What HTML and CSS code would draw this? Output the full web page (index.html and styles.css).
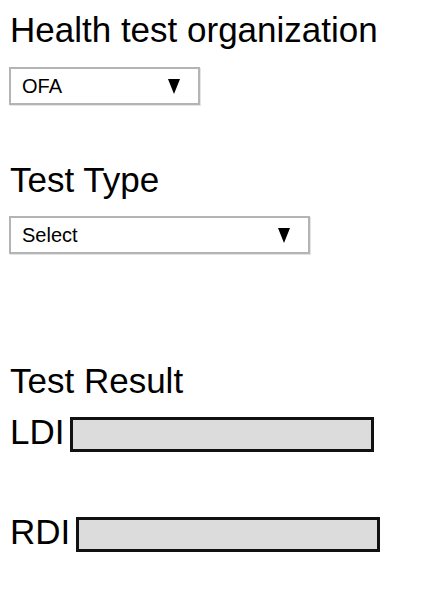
FILE: index.html
```html
<!DOCTYPE html>
<html>
<head>
<meta charset="utf-8">
<link rel="stylesheet" href="styles.css">
</head>
<body>
<div class="page">
  <h1 class="heading heading-first">Health test organization</h1>
  <div class="select select-short">
    <span class="select-value">OFA</span>
    <span class="select-arrow"></span>
  </div>

  <h1 class="heading heading-second">Test Type</h1>
  <div class="select select-long">
    <span class="select-value">Select</span>
    <span class="select-arrow"></span>
  </div>

  <h1 class="heading heading-third">Test Result</h1>
  <div class="result-row result-ldi">
    <span class="result-label">LDI</span>
    <div class="result-box"></div>
  </div>
  <div class="result-row result-rdi">
    <span class="result-label">RDI</span>
    <div class="result-box"></div>
  </div>
</div>
</body>
</html>
```

FILE: styles.css
```css
html, body {
  margin: 0;
  padding: 0;
  background: #ffffff;
}

.page {
  padding: 10px 10px 0 10px;
  font-family: "Liberation Sans", Arial, sans-serif;
  color: #000;
}

.heading {
  margin: 0;
  font-size: 35px;
  font-weight: normal;
  line-height: 40px;
}

.heading-second {
  margin-top: 55px;
}

.heading-third {
  margin-top: 107px;
}

.select {
  box-sizing: border-box;
  height: 38px;
  margin-top: 17px;
  margin-left: -1px;
  border: 2px solid #b4b4b4;
  background: #fff;
  display: flex;
  align-items: center;
  justify-content: space-between;
  padding: 0 18px 0 11px;
  box-shadow: 1px 1px 0 #e4e4e4;
}

.select-long {
  margin-top: 16px;
}

.select-short {
  width: 191px;
}

.select-long {
  width: 301px;
}

.select-value {
  font-size: 20px;
  line-height: 24px;
}

.select-arrow {
  width: 0;
  height: 0;
  border-left: 6.5px solid transparent;
  border-right: 6.5px solid transparent;
  border-top: 15px solid #000;
}

.result-row {
  display: flex;
  align-items: flex-start;
  gap: 6px;
  height: 35px;
}

.result-ldi {
  margin-top: 16px;
}

.result-rdi {
  margin-top: 65px;
}

.result-label {
  font-size: 35px;
  line-height: 30px;
}

.result-box {
  box-sizing: border-box;
  width: 304px;
  height: 35px;
  background: #dcdcdc;
  border: 3px solid #111;
}
```
